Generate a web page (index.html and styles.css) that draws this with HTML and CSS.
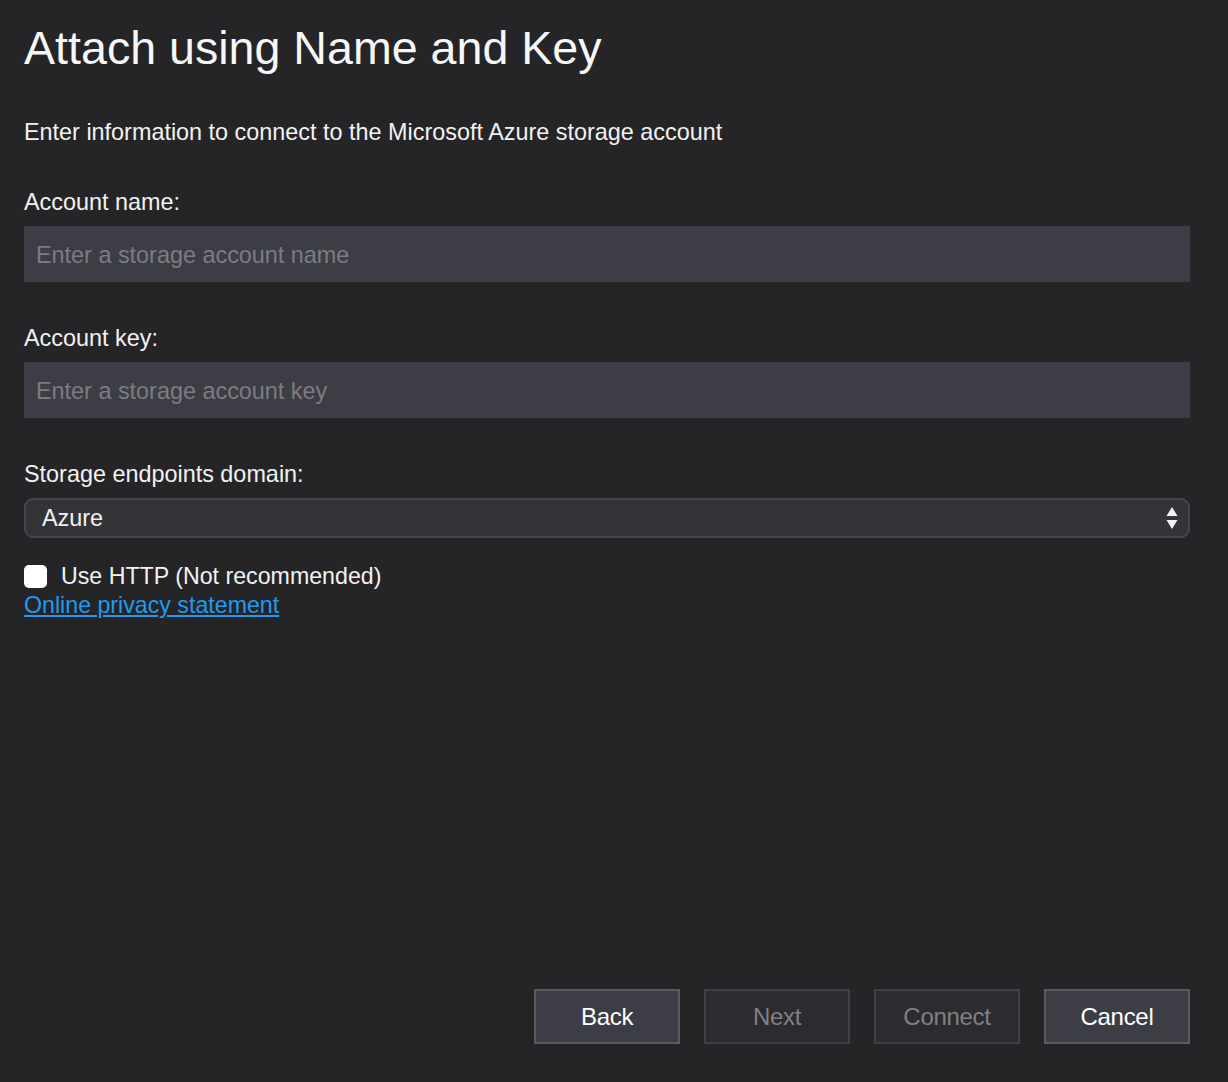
FILE: index.html
```html
<!DOCTYPE html>
<html>
<head>
<meta charset="utf-8">
<link rel="stylesheet" href="styles.css">
</head>
<body>
<div class="page">
  <div class="content">
    <h1 class="title">Attach using Name and Key</h1>
    <p class="intro">Enter information to connect to the Microsoft Azure storage account</p>
    <div class="field">
      <label class="label">Account name:</label>
      <div class="input placeholder">Enter a storage account name</div>
    </div>
    <div class="field">
      <label class="label">Account key:</label>
      <div class="input placeholder">Enter a storage account key</div>
    </div>
    <div class="field field-select">
      <label class="label">Storage endpoints domain:</label>
      <div class="select">
        <span>Azure</span>
        <svg class="arrows" width="12" height="24" viewBox="0 0 12 24"><path d="M6 1 L11.5 10 L0.5 10 Z" fill="#f2f2f2"/><path d="M6 23 L11.5 14 L0.5 14 Z" fill="#f2f2f2"/></svg>
      </div>
    </div>
    <div class="check-row">
      <span class="checkbox"></span>
      <span class="check-label">Use HTTP (Not recommended)</span>
    </div>
    <a class="link" href="#">Online privacy statement</a>
  </div>
  <div class="buttons">
    <div class="btn btn-active">Back</div>
    <div class="btn btn-disabled">Next</div>
    <div class="btn btn-disabled">Connect</div>
    <div class="btn btn-active">Cancel</div>
  </div>
</div>
</body>
</html>
```
FILE: styles.css
```css
html, body {
  margin: 0;
  padding: 0;
  background: #252528;
  height: 100%;
}
body {
  font-family: "Liberation Sans", Arial, sans-serif;
  color: #f2f2f2;
}
.page {
  box-sizing: border-box;
  height: 1082px;
  padding: 0 38px 38px 24px;
  display: flex;
  flex-direction: column;
  justify-content: space-between;
}
.content {
  display: flex;
  flex-direction: column;
}
.title {
  margin: 20px 0 0 0;
  font-weight: normal;
  font-size: 46.6px;
  line-height: 56px;
  color: #f7f7f7;
}
.intro {
  margin: 42px 0 0 0;
  font-size: 23.4px;
  line-height: 28px;
}
.field {
  display: flex;
  flex-direction: column;
  margin-top: 42px;
}
.label {
  font-size: 23.4px;
  line-height: 28px;
  margin-bottom: 10px;
}
.input {
  height: 56px;
  background: #3d3d45;
  box-sizing: border-box;
  padding: 3px 12px 0 12px;
  display: flex;
  align-items: center;
  font-size: 23.4px;
}
.placeholder {
  color: #7c7c82;
}
.select {
  height: 40px;
  box-sizing: border-box;
  border: 2px solid #45454b;
  border-radius: 9px;
  background: #333338;
  display: flex;
  align-items: center;
  justify-content: space-between;
  padding: 0 10px 0 16px;
  font-size: 23.4px;
}
.check-row {
  display: flex;
  align-items: center;
  margin-top: 24px;
  height: 28px;
}
.checkbox {
  width: 23px;
  height: 23px;
  border-radius: 5px;
  background: #ffffff;
  margin-right: 14px;
}
.check-label {
  font-size: 23.2px;
}
.link {
  align-self: flex-start;
  color: #1e9bf0;
  font-size: 23.2px;
  line-height: 30px;
  text-decoration: underline;
}
.buttons {
  display: flex;
  justify-content: flex-end;
  gap: 24px;
}
.btn {
  width: 146px;
  height: 55px;
  box-sizing: border-box;
  display: flex;
  align-items: center;
  justify-content: center;
  font-size: 24px;
  letter-spacing: -0.3px;
}
.btn-active {
  background: #3d3d45;
  border: 2px solid #5a5a60;
  color: #ffffff;
}
.btn-disabled {
  background: #2b2b30;
  border: 2px solid #404046;
  color: #808085;
}
```
